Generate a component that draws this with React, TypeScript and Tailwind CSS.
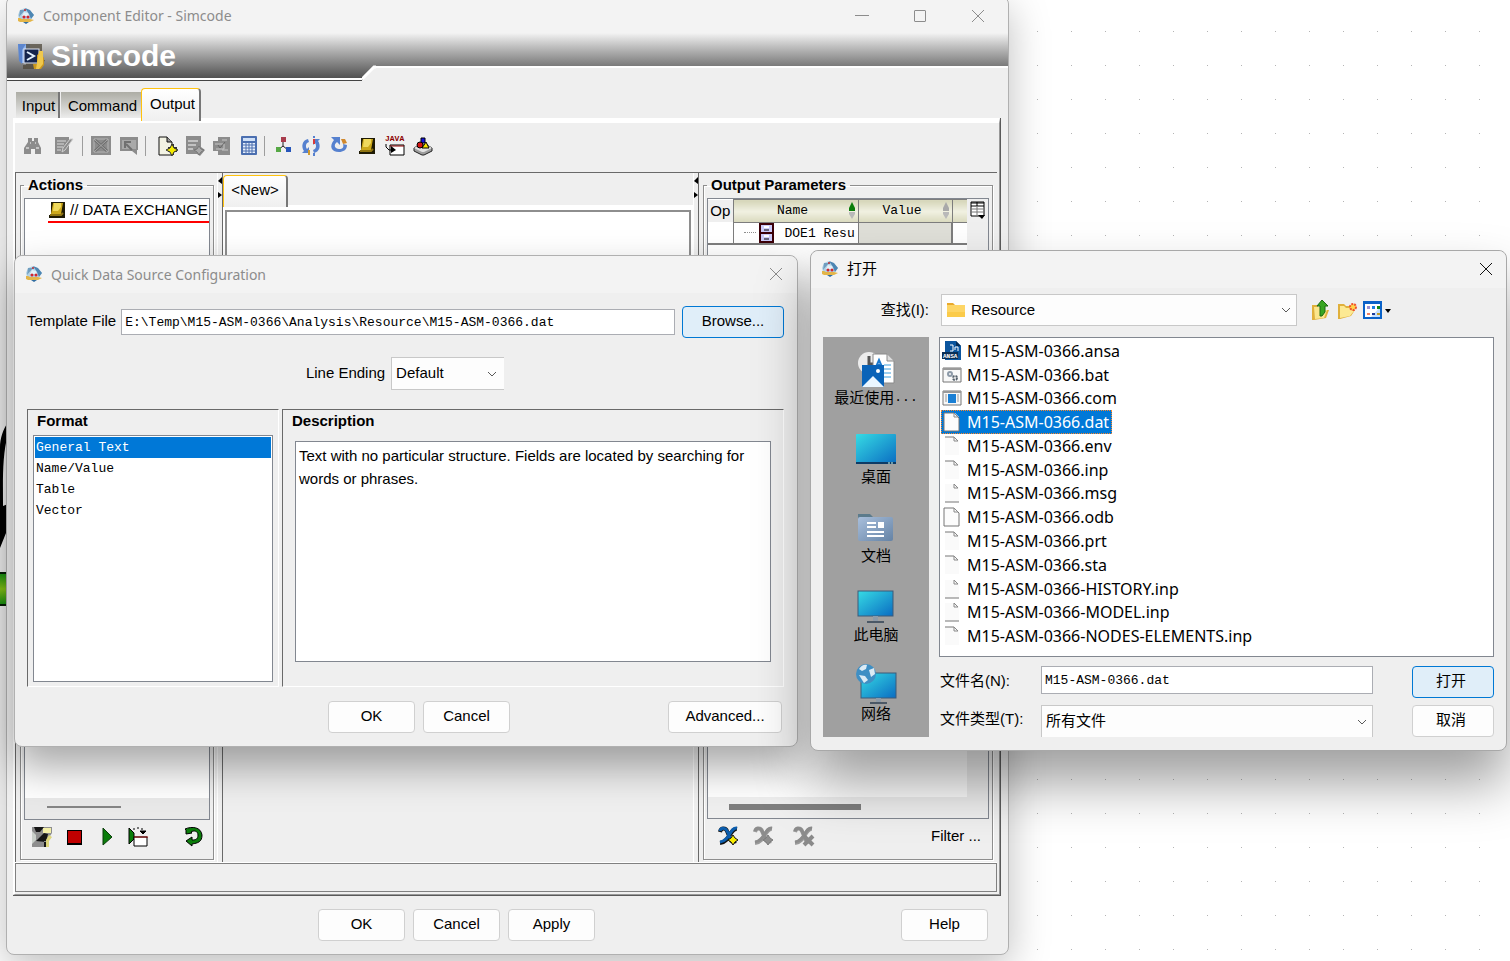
import { useState, type ReactNode } from "react";
import { clsx } from "clsx";

const FORMATS = ["General Text", "Name/Value", "Table", "Vector"];

type FileKind = "ansa" | "bat" | "com" | "page" | "top" | "bottom";

const FILES: { name: string; kind: FileKind }[] = [
  { name: "M15-ASM-0366.ansa", kind: "ansa" },
  { name: "M15-ASM-0366.bat", kind: "bat" },
  { name: "M15-ASM-0366.com", kind: "com" },
  { name: "M15-ASM-0366.dat", kind: "page" },
  { name: "M15-ASM-0366.env", kind: "top" },
  { name: "M15-ASM-0366.inp", kind: "top" },
  { name: "M15-ASM-0366.msg", kind: "bottom" },
  { name: "M15-ASM-0366.odb", kind: "page" },
  { name: "M15-ASM-0366.prt", kind: "top" },
  { name: "M15-ASM-0366.sta", kind: "top" },
  { name: "M15-ASM-0366-HISTORY.inp", kind: "bottom" },
  { name: "M15-ASM-0366-MODEL.inp", kind: "bottom" },
  { name: "M15-ASM-0366-NODES-ELEMENTS.inp", kind: "top" },
];

/* ---------- icons ---------- */

function Icon({ children, size = 20, className }: { children: ReactNode; size?: number; className?: string }) {
  return (
    <svg width={size} height={size} viewBox={`0 0 ${size} ${size}`} className={clsx("shrink-0", className)} aria-hidden="true">
      {children}
    </svg>
  );
}

function AppIcon() {
  return (
    <Icon size={18}>
      <path d="M3 3 8 1l4 2 5 5-3 4-5 1-7-1-1-4z" fill="#b4d3e6" />
      <path d="M3 3h5L2 10z" fill="#6f9dbf" />
      <path d="m8 1 5 2 4 5-3 4-2-5z" fill="#4d86b3" />
      <path d="m7 5 4 1 1 3H5z" fill="#e3f1f8" />
      <circle cx="8" cy="3" r="1" fill="#b3242c" />
      <circle cx="7" cy="10" r="1.500" fill="#d2252e" />
      <circle cx="11" cy="10" r="1.500" fill="#d2252e" />
      <path d="M1 11h2l2 1h8l4 1-4 2H3l-2-1z" fill="#e3b548" />
      <path d="M6 15h6l-3 2z" fill="#2e6ba0" />
    </Icon>
  );
}

function SimcodeIcon() {
  return (
    <Icon size={28}>
      <path d="M1 2h12v4l-4 2v13H5V8H1z" fill="#8fb3ec" />
      <path d="M1 2h8L5 8v14l-3-3z" fill="#5c86cf" />
      <path d="M9 2h16v16h3l-5 9H6v-4h3z" fill="#4d473a" opacity=".75" />
      <rect x="7" y="7" width="15" height="14" fill="#14254d" stroke="#dfe6f2" strokeWidth="1" />
      <path d="m10 10 7 4-7 4" fill="none" stroke="#e4f3ff" strokeWidth="2" />
      <path d="M16 22h4v-9l3-2 4 5v7l-3 4h-7z" fill="#c99820" />
      <path d="M22 9h4v13l-4 5h-3z" fill="#efc84c" />
    </Icon>
  );
}

function Binoculars() {
  return (
    <Icon>
      <path d="M5 2h4v3h2V2h4v4l3 6v6h-6v-5H8v5H1v-6l4-6z" fill="#8c8c8c" />
      <path d="M3 12h3M13 12h3M7 7h1M12 7h1" stroke="#c4c4c4" strokeWidth="2" />
    </Icon>
  );
}

function EditSheet() {
  return (
    <Icon>
      <path d="M1 1h14v17H1z" fill="#8c8c8c" />
      <path d="M3 5h9M3 8h7M3 11h6M3 14h4" stroke="#dadada" />
      <path d="m19 3-8 11-3 2 1-4 7-9z" fill="#8c8c8c" stroke="#cfcfcf" />
    </Icon>
  );
}

function CrossBox() {
  return (
    <Icon>
      <path d="M0 0h20v19H0z" fill="#8c8c8c" />
      <path d="M3 3h14v13H3z" fill="none" stroke="#b5b5b5" />
      <path d="m4 4 12 11M16 4 4 15" stroke="#707070" strokeWidth="3" />
      <path d="m4 4 12 11M16 4 4 15" stroke="#a8a8a8" />
    </Icon>
  );
}

function ArrowSheet() {
  return (
    <Icon>
      <path d="M1 1h18v13h-1v5l-5-4H1z" fill="#8c8c8c" />
      <path d="M3 4h14v9H3z" fill="#a9a9a9" />
      <path d="m13 14-6-6M6 12V6h6" stroke="#707070" strokeWidth="2" fill="none" />
    </Icon>
  );
}

function NewPage() {
  return (
    <Icon className="overflow-visible">
      <path d="M1 1h8l5 5v13H1z" fill="#f3f3e4" stroke="#111" />
      <path d="M9 1v5h5" fill="#999" stroke="#111" />
      <path d="M13 8h3v3h3v5h-3v3h-3v-3h-3v-5h3z" fill="#333" />
      <path d="m14 8 2 4 4 2-4 2-2 4-2-4-4-2 4-2z" fill="#f4ea00" stroke="#333" />
    </Icon>
  );
}

function GrayPageStar() {
  return (
    <Icon>
      <path d="M1 0h15v11l4 3-5 6-3-2H1z" fill="#8c8c8c" />
      <path d="M3 5h10M3 9h8M3 13h5" stroke="#c2c2c2" strokeWidth="2" />
      <path d="m14 10 2 3 3 1-3 2-2 3-2-3-3-2 3-1z" fill="#a8a8a8" stroke="#777" />
    </Icon>
  );
}

function GrayPageCopy() {
  return (
    <Icon>
      <path d="M6 1h12v18H6v-4H1V5h5z" fill="#8c8c8c" />
      <path d="M10 4h5M10 14h6M3 8h9v5H4" stroke="#c6c6c6" fill="none" />
      <path d="m6 9 2 3 5-6" stroke="#666" fill="none" />
    </Icon>
  );
}

function Calculator() {
  return (
    <Icon>
      <rect x="2" width="16" height="19" rx="1" fill="#4b6fb0" />
      <rect x="4" y="2" width="12" height="3" fill="#cfe0f7" />
      <rect x="4" y="7" width="12" height="10" fill="#e8f0fb" />
      <path d="M4 9h12M4 12h12M4 15h12M7 7v10M10 7v10M13 7v10" stroke="#4b6fb0" />
    </Icon>
  );
}

function TreeIcon() {
  return (
    <Icon>
      <path d="M10 6v4m0 0-5 4m5-4 5 4" stroke="#222" fill="none" />
      <rect x="8" y="1" width="5" height="5" fill="#a83c4c" />
      <rect x="3" y="11" width="5" height="5" fill="#56a845" />
      <rect x="13" y="11" width="5" height="5" fill="#2656ba" />
    </Icon>
  );
}

function SyncIcon() {
  return (
    <Icon>
      <path d="M7 3C1 4 0 11 3 15l-2 2h7v-6l-2 2C4 10 5 7 8 6zM13 17c6-1 7-8 4-12l2-2h-7v6l2-2c2 3 1 6-2 7z" fill="#5681cf" />
      <path d="M13 3v5" stroke="#d83a3a" strokeWidth="2" />
      <path d="M8 14v5" stroke="#d09a2d" strokeWidth="2" />
      <path d="M13 0v2M13 17v3" stroke="#5681cf" strokeWidth="2" />
    </Icon>
  );
}

function LoopIcon() {
  return (
    <Icon>
      <path d="M2 1h9v8L8 6c-4 3-2 7 2 7s5-2 4-5l4 1c0 5-4 7-8 7C2 16 0 10 5 4z" fill="#5681cf" />
      <path d="M12 3h4l2 4-4 1z" fill="#d0882d" />
    </Icon>
  );
}

function Scroll() {
  return (
    <Icon size={18}>
      <path d="M3 1h14v16H1v-3h2z" fill="#1e1a04" />
      <path d="M5 2h10l-2 11H3z" fill="#cda91b" />
      <path d="M6 2h7v4l-3 4H5z" fill="#efd95c" />
      <path d="M2 14h11l2-2" stroke="#8f7411" fill="none" strokeWidth="2" />
    </Icon>
  );
}

function JavaIcon() {
  return (
    <Icon className="overflow-visible">
      <text x="0" y="5" fontSize="8" fontFamily="Liberation Mono, monospace" fill="#8b0000" fontWeight="bold">JAVA</text>
      <path d="M5 9h14v10H5z" fill="#fff" stroke="#000" />
      <path d="M5 10h14" stroke="#8b0000" />
      <path d="M1 8v3l3 3h5" stroke="#000" fill="none" />
      <path d="m6 10 5 4-5 3z" fill="#000" />
    </Icon>
  );
}

function ShapesIcon() {
  return (
    <Icon>
      <path d="m1 12 5-3h8l5 3v3l-8 4h-2l-8-4z" fill="#9e9e9e" stroke="#222" />
      <path d="m1 12 8 4h2l8-4-5-3H6z" fill="#e2e2e2" />
      <path d="M8 2h4v5H8z" fill="#1414e0" stroke="#000" />
      <circle cx="7" cy="9" r="3" fill="#d41414" stroke="#000" />
      <path d="m13 6 3 6H9z" fill="#f6e600" stroke="#000" />
    </Icon>
  );
}

function Camera() {
  return (
    <Icon>
      <path d="M0 0h20v6l-4 6v8H0z" fill="#8e8e8e" />
      <path d="M2 0h10L8 5H4zM12 6 4 14l10 1 2-8zM12 14h3v6h-3z" fill="#161616" />
      <path d="m0 4 4 4v5l-4 4z" fill="#c9cfc9" />
      <path d="M11 1h8v5h-8z" fill="#f3efa8" />
      <path d="m17 8 3 2-3 4v6h-3v-7z" fill="#ddd67c" />
    </Icon>
  );
}

function ReplayIcon() {
  return (
    <Icon>
      <path d="M1 1v16l5-5V6z" fill="#0a7d0a" stroke="#000" />
      <path d="M6 10h13v9H6z" fill="#fff" stroke="#000" />
      <path d="M6 10h14" stroke="#8b0000" />
      <path d="M5 2h2M9 1h2M13 2h2M12 4h6l-3 3z" stroke="#000" />
    </Icon>
  );
}

function ReturnIcon() {
  return (
    <Icon>
      <path d="M1 2c7-3 16-2 17 6 0 7-4 8-10 9v2l-6-5 6-4v3c4 0 6-1 6-5s-4-5-7-3l1 1-6 1V3z" fill="#0a7d0a" stroke="#000" />
    </Icon>
  );
}

function VarIcon({ on, badge }: { on?: boolean; badge: "plus" | "cross" }) {
  return (
    <Icon className="overflow-visible">
      <path d="M1 6c1-5 6-4 7-1l3 7c1 4 3 4 6 3M18 3C11 2 11 16 1 17" fill="none" stroke={on ? "#111" : "#9a9a9a"} strokeWidth="4" />
      <path d="M1 5c1-4 6-3 7 0l3 6c1 4 3 4 6 3M18 2C11 1 11 15 1 16" fill="none" stroke={on ? "#0c5eae" : "#8c8c8c"} strokeWidth="3" />
      {badge === "plus" ? (
        <path
          d="m14 9 2 3 3 2-3 2-2 3-2-3-3-2 3-2z"
          fill={on ? "#f6ea00" : "#8e8e8e"}
          stroke={on ? "#111" : "#7c7c7c"}
        />
      ) : (
        <path d="m10 10 9 9M19 10l-9 9" stroke="#8a8a8a" strokeWidth="4" />
      )}
    </Icon>
  );
}

function ColumnPicker() {
  return (
    <Icon size={18}>
      <path d="M2 1h13v14H2z" fill="#fff" stroke="#000" />
      <path d="M2 2h13M2 5h13M8 1v4" stroke="#000" />
      <path d="M2 8h13M2 11h13M8 6v9" stroke="#777" />
      <path d="M9 14h7l-3 4z" fill="#000" />
    </Icon>
  );
}

function SortArrows({ active }: { active?: boolean }) {
  return (
    <svg width="8" height="18" viewBox="0 0 8 18" aria-hidden="true">
      <path d="M4 0 7 6v3H1V6z" fill={active ? "#0a7d0a" : "#a9a9a9"} />
      <path d="M1 10h6v2l-3 5-3-5z" fill="#b9b9b9" />
    </svg>
  );
}

function Chevron() {
  return (
    <svg width="10" height="6" viewBox="0 0 10 6" className="pointer-events-none shrink-0" aria-hidden="true">
      <path d="m1 1 4 4 4-4" fill="none" stroke="#5a5a5a" />
    </svg>
  );
}

function CloseGlyph({ color }: { color: string }) {
  return (
    <svg width="14" height="14" viewBox="0 0 14 14" aria-hidden="true">
      <path d="m1 1 12 12M13 1 1 13" stroke={color} strokeWidth="1" />
    </svg>
  );
}

function FileIcon({ kind }: { kind: FileKind }) {
  if (kind === "ansa") {
    return (
      <Icon>
        <path d="M3 0h11l5 5v14H3z" fill="#0b559e" />
        <path d="M14 0v5h5z" fill="#062c55" />
        <path d="M8 4h3v6H8M13 9V6h3v4" stroke="#fff" fill="none" />
        <path d="M0 11h16v7H0z" fill="#0a2e55" />
        <text x="1" y="17" fontSize="6" fontFamily="Liberation Mono, monospace" fontWeight="bold" fill="#fff">ANSA</text>
      </Icon>
    );
  }
  if (kind === "bat" || kind === "com") {
    return (
      <Icon>
        <path d="M1 3h18v14H1z" fill="#f8f8f8" stroke="#777" />
        <path d="M1 4h18" stroke="#9a9a9a" strokeWidth="2" />
        {kind === "bat" ? (
          <>
            <circle cx="8" cy="9" r="2" fill="none" stroke="#8d9aa8" strokeWidth="2" />
            <circle cx="13" cy="13" r="2" fill="none" stroke="#56616c" strokeWidth="2" strokeDasharray="2 1" />
          </>
        ) : (
          <>
            <path d="M3 7h2M3 9h2M3 11h2M3 13h2M15 7h2M15 9h2M15 11h2M15 13h2" stroke="#999" />
            <rect x="6" y="6" width="8" height="9" fill="#1a7fd4" />
          </>
        )}
      </Icon>
    );
  }
  return (
    <Icon>
      <path d="M3 1h10l4 4v14H3z" fill="#fafafa" />
      {kind === "page" && <path d="M2 1h10l5 5v13H2z" fill="#fcfcfc" stroke="#777" />}
      {kind === "top" && <path d="M3 1h9" stroke="#777" />}
      {kind === "bottom" && <path d="M3 19h14" stroke="#777" />}
      <path d="M12 1v4h4" fill="none" stroke="#888" />
      <path d="m12 1 4 4" stroke="#888" />
    </Icon>
  );
}

/* ---------- places bar drawings ---------- */

function PlaceDefs() {
  return (
    <defs>
      <linearGradient id="screen" x1="0" y1="0" x2="1" y2="1">
        <stop offset="0" stopColor="#36dbe4" />
        <stop offset="1" stopColor="#0a6cc2" />
      </linearGradient>
      <linearGradient id="folder" x1="0" y1="0" x2="1" y2="1">
        <stop offset="0" stopColor="#a9bfdc" />
        <stop offset="1" stopColor="#6583a5" />
      </linearGradient>
    </defs>
  );
}

function PlaceArt({ children }: { children: ReactNode }) {
  return (
    <svg width="44" height="42" viewBox="0 0 44 42" className="-mb-0.5 shrink-0" aria-hidden="true">
      {children}
    </svg>
  );
}

const PLACES: { label: string; dots?: boolean; art: ReactNode }[] = [
  {
    label: "最近使用",
    dots: true,
    art: (
      <>
        <PlaceDefs />
        <circle cx="15" cy="15" r="11" fill="#ececec" />
        <path d="M15 8v8h5" fill="none" stroke="#555" strokeWidth="3" />
        <path d="M19 6h14l7 7v22H19z" fill="#fff" stroke="#8a8a8a" />
        <path d="M33 6v7h7" fill="#ddd" stroke="#8a8a8a" />
        <path d="m22 19 3-7 3 7m-5-2h4" fill="none" stroke="#1a78cc" strokeWidth="2" />
        <path d="M30 17h7M30 21h7M30 25h7M30 29h7" stroke="#3a9fe0" />
        <rect x="8" y="17" width="22" height="22" fill="#0a63b8" />
        <path d="m8 39 11-11 11 11z" fill="#eaf6ff" />
        <circle cx="24" cy="23" r="2" fill="#fff" />
      </>
    ),
  },
  {
    label: "桌面",
    art: (
      <>
        <rect x="2" y="7" width="40" height="30" rx="1" fill="url(#screen)" />
        <path d="M2 35h40v2H2z" fill="#0d3b66" />
        <path d="M34 36h2M37 36h2" stroke="#cfe" />
      </>
    ),
  },
  {
    label: "文档",
    art: (
      <>
        <path d="M4 8h12l3 3v6H4z" fill="#5c7b8c" />
        <rect x="4" y="11" width="35" height="24" rx="2" fill="url(#folder)" />
        <path d="M13 17h9M13 21h9M13 26h17M13 30h17" stroke="#fff" strokeWidth="2" />
        <rect x="24" y="16" width="6" height="6" fill="#fff" />
      </>
    ),
  },
  {
    label: "此电脑",
    art: (
      <>
        <rect x="4" y="6" width="35" height="25" fill="url(#screen)" stroke="#3c5a78" />
        <path d="M19 31h5v5h-5z" fill="#8d9aa8" />
        <path d="M13 37h17" stroke="#4b5866" strokeWidth="2" />
      </>
    ),
  },
  {
    label: "网络",
    art: (
      <>
        <rect x="7" y="9" width="35" height="25" fill="url(#screen)" stroke="#3c5a78" />
        <path d="M22 34h5v4h-5z" fill="#8d9aa8" />
        <path d="M16 39h17" stroke="#4b5866" strokeWidth="2" />
        <circle cx="12" cy="10" r="10" fill="#3f8fc4" />
        <path d="M5 5c2-4 6-5 8-4l-1 4-4 2zM15 6l5-2 1 6-4 3zM5 11l6 1 3 4-4 3z" fill="#dcebf5" />
      </>
    ),
  },
];

function UpFolder() {
  return (
    <Icon>
      <path d="M1 5h5l1 2h6v3h5l-3 8-12 2H1z" fill="#e0b03c" />
      <path d="M3 7h8l1 3h4l-3 8-9 1z" fill="#fbe68c" />
      <path d="M9 16V6H6l5-6 6 6h-3v6l-3 4z" fill="#37a522" stroke="#1b6b0f" />
    </Icon>
  );
}

function NewFolder() {
  return (
    <Icon>
      <path d="M1 4h6l2 2h6v4h3l-4 6-11 3H1z" fill="#e0b03c" />
      <path d="M3 6h4l2 2h5v2l3 1-4 5-10 2z" fill="#fce993" />
      <circle cx="16" cy="7" r="3" fill="#ffd54a" stroke="#f0502c" strokeWidth="2" strokeDasharray="2 1" />
    </Icon>
  );
}

function ViewIcon() {
  return (
    <svg width="28" height="20" viewBox="0 0 28 20" aria-hidden="true">
      <path d="M0 1h19v18H0z" fill="#0a62c8" />
      <path d="M2 4h15v13H2z" fill="#fff" />
      <path d="M17 7v10H8z" fill="#c4e0ff" />
      <path d="M4 6h3v3H4z" fill="#9a8fd0" />
      <path d="M9 6h3v3H9z" fill="#1a7fe0" />
      <path d="M14 6h3v3h-3z" fill="#138a13" />
      <path d="M4 13h3v2H4z" fill="#f08060" />
      <path d="M9 13h3v2H9z" fill="#1a3c9c" />
      <path d="M14 13h3v2h-3z" fill="#c09a20" />
      <path d="M22 9h6l-3 4z" fill="#000" />
    </svg>
  );
}

function FolderIcon() {
  return (
    <Icon>
      <path d="M1 3h6l2 2h9v11H1z" fill="#e9a92c" />
      <path d="M1 5h18v12H1z" fill="#fdd565" />
      <path d="M1 12h18v5H1z" fill="#fbcb4a" />
    </Icon>
  );
}

/* ---------- shared controls ---------- */

function PushButton({ children, primary, className }: { children: ReactNode; primary?: boolean; className?: string }) {
  return (
    <button
      type="button"
      className={clsx(
        "h-8 shrink-0 rounded border pb-0.5 text-[15px] leading-5",
        primary ? "border-[#0078d4] bg-[#e0eef9]" : "border-[#d0d0d0] bg-[#fdfdfd]",
        className
      )}
    >
      {children}
    </button>
  );
}

function ToolButton({ label, children }: { label: string; children: ReactNode }) {
  return (
    <button type="button" aria-label={label} className="flex h-5 w-5 shrink-0 items-center justify-center">
      {children}
    </button>
  );
}

function ToolSeparator() {
  return <span className="h-5 w-px bg-[#9d9d9d]" />;
}

function SplitHandle() {
  return (
    <div className="flex w-1 shrink-0 flex-col pt-1">
      <svg width="4" height="22" viewBox="0 0 4 22" aria-hidden="true">
        <path d="M4 0v7L0 4zM0 15l4 3-4 3z" fill="#000" />
      </svg>
    </div>
  );
}

/* ---------- windows ---------- */

function ComponentEditor() {
  return (
    <section className="absolute -top-1 right-[501px] bottom-1.5 left-1.5 flex flex-col rounded-lg border border-[#b0b0b0] bg-[#efefef] shadow-[0_12px_40px_rgba(0,0,0,0.26)]">
      <header className="flex h-9 shrink-0 items-center rounded-t-lg bg-[#f3f3f3] pt-px pr-[17px] pl-2.5">
        <AppIcon />
        <h1 className="ml-2 flex-1 font-['Noto_Sans'] text-[14px] text-[#8c8c8c]">Component Editor - Simcode</h1>
        <div className="flex items-center gap-[45px]">
          <button type="button" aria-label="Minimize" className="flex h-4 w-3.5 items-center">
            <span className="h-px w-full bg-[#8c8c8c]" />
          </button>
          <button type="button" aria-label="Maximize" className="h-3 w-3 rounded-[1px] border border-[#8c8c8c]" />
          <button type="button" aria-label="Close" className="mr-1.5">
            <CloseGlyph color="#8c8c8c" />
          </button>
        </div>
      </header>

      {/* Banner */}
      <div className="flex h-[47px] shrink-0 bg-linear-to-b from-[#f3f3f3] to-[#4c4c4c]">
        <div className="flex w-[355px] shrink-0 items-center gap-1.5 border-b-2 border-white pl-2.5 shadow-[0_1px_0_#444]">
          <SimcodeIcon />
          <h2 className="text-[30px] font-bold text-white">Simcode</h2>
        </div>
        <svg width="14" height="47" viewBox="0 0 14 47" className="shrink-0" aria-hidden="true">
          <path d="M0 47 12 33h2v14z" fill="#efefef" />
          <path d="M0 46 12 34h2" fill="none" stroke="#fff" strokeWidth="3" />
        </svg>
        <div className="mt-[33px] flex-1 border-t-2 border-white bg-[#efefef]" />
      </div>

      {/* Tabs */}
      <div role="tablist" className="mt-2 ml-[9px] flex h-[30px] shrink-0 items-end text-[15px]">
        <button type="button" role="tab" className="h-[26px] w-11 border-r-2 border-[#777] bg-linear-to-b from-[#adada5] to-[#ececec] pt-0.5 pl-[3px]">Input</button>
        <button type="button" role="tab" className="ml-px h-[26px] w-20 bg-linear-to-b from-[#adada5] to-[#ececec] pt-0.5 pl-[3px]">Command</button>
        <button type="button" role="tab" aria-selected="true" className="relative z-10 -mb-[3px] h-[33px] w-[60px] rounded-t-sm border-t border-r-2 border-l border-t-[#ffc20e] border-r-[#777] border-l-[#ffc20e] bg-linear-to-b from-white to-[#efefef] pb-px pl-1">
          Output
        </button>
      </div>

      <div className="mr-[7px] ml-1.5 flex min-h-0 flex-1 flex-col border-r border-b border-[#5a5a5a]">
        <div className="flex min-h-0 flex-1 flex-col border-t-[5px] border-r border-b border-l-2 border-t-white border-r-[#999] border-b-[#999] border-l-white pr-0.5">
          <div className="flex h-[49px] shrink-0 items-center pb-1 pl-2">
            <div className="flex gap-[11px]">
              <ToolButton label="Find"><Binoculars /></ToolButton>
              <ToolButton label="Edit"><EditSheet /></ToolButton>
            </div>
            <div className="flex gap-2 pl-2">
              <ToolSeparator />
              <ToolButton label="Delete"><CrossBox /></ToolButton>
              <ToolButton label="Move"><ArrowSheet /></ToolButton>
            </div>
            <div className="flex gap-3 pl-1.5">
              <ToolSeparator />
              <div className="flex gap-[7px]">
                <ToolButton label="New section"><NewPage /></ToolButton>
                <ToolButton label="Insert section"><GrayPageStar /></ToolButton>
                <ToolButton label="Check section"><GrayPageCopy /></ToolButton>
                <ToolButton label="Calculator"><Calculator /></ToolButton>
              </div>
            </div>
            <div className="flex gap-2 pl-[5px]">
              <ToolSeparator />
              <ToolButton label="Structure"><TreeIcon /></ToolButton>
              <ToolButton label="Synchronize"><SyncIcon /></ToolButton>
              <ToolButton label="Loop"><LoopIcon /></ToolButton>
              <ToolButton label="Script"><Scroll /></ToolButton>
              <ToolButton label="Java"><JavaIcon /></ToolButton>
              <ToolButton label="Plugins"><ShapesIcon /></ToolButton>
            </div>
          </div>

          <div className="flex min-h-0 flex-1 border-t border-[#696969]">
            {/* Actions */}
            <div className="flex w-[203px] shrink-0 flex-col border-r border-l border-r-white border-l-[#696969] pt-1 pr-[3px] pb-[3px] pl-1">
              <fieldset className="flex min-h-0 flex-1 flex-col border border-[#8e8e8e] px-[3px] shadow-[1px_1px_0_#fff,inset_1px_1px_0_#fff]">
                <legend className="px-1 text-[15px] leading-4 font-bold">Actions</legend>
                <div className="mt-[5px] flex min-h-0 flex-1 flex-col border border-[#828790] bg-white">
                  <div className="ml-[23px] flex h-6 items-center gap-1 overflow-hidden border-b-2 border-[#f00] text-[15px] whitespace-nowrap">
                    <Scroll />
                    // DATA EXCHANGE
                  </div>
                  <div className="flex-1" />
                  <div className="h-[21px] bg-[#e9e9e9] pt-2 pl-[22px]">
                    <div className="h-0.5 w-[74px] bg-[#858585]" />
                  </div>
                </div>
                <div className="flex h-[39px] shrink-0 items-center gap-3 pr-1.5 pb-[5px] pl-2">
                  <ToolButton label="Record"><Camera /></ToolButton>
                  <ToolButton label="Stop">
                    <span className="h-[15px] w-[15px] border border-b-2 border-black bg-[#c00000]" />
                  </ToolButton>
                  <ToolButton label="Run">
                    <Icon>
                      <path d="M7 1v17l9-8z" fill="#0a7d0a" stroke="#0b3d0b" />
                    </Icon>
                  </ToolButton>
                  <ToolButton label="Run section"><ReplayIcon /></ToolButton>
                  <span className="flex-1" />
                  <ToolButton label="Revert"><ReturnIcon /></ToolButton>
                </div>
              </fieldset>
            </div>
            <SplitHandle />

            {/* Editor */}
            <div className="flex min-w-0 flex-1 flex-col border-r border-l border-r-white border-l-[#696969] pt-0.5">
              <div role="tablist" className="flex h-[30px] shrink-0">
                <button type="button" role="tab" aria-selected="true" className="relative -mb-0.5 h-8 w-[65px] rounded-t-sm border-t border-r-2 border-l border-t-[#ffc20e] border-r-[#777] border-l-[#ffc20e] bg-linear-to-b from-white to-[#efefef] pb-0.5 text-[15px]">
                  &lt;New&gt;
                </button>
              </div>
              <div className="flex h-[500px] flex-col border-t-[5px] border-r-2 border-l-2 border-white">
                <textarea aria-label="Section" className="w-full flex-1 resize-none border-2 border-[#8e8e8e] bg-white outline-none" />
              </div>
            </div>
            <SplitHandle />

            {/* Output parameters */}
            <div className="flex w-[299px] shrink-0 flex-col border-l border-[#696969] px-1 pt-1 pb-[3px]">
              <fieldset className="flex min-h-0 min-w-0 flex-1 flex-col border border-[#8e8e8e] px-[3px] shadow-[1px_1px_0_#fff,inset_1px_1px_0_#fff]">
                <legend className="px-1 text-[15px] leading-4 font-bold">Output Parameters</legend>
                <div className="mt-[5px] flex min-h-0 flex-1 flex-col border border-[#828790] bg-[#efefef]">
                  <div className="flex min-h-0 flex-1">
                    <div className="min-w-0 flex-1 bg-white">
                      <table className="w-full table-fixed border-collapse border-b-2 border-[#7d7d7d]">
                        <thead>
                          <tr className="h-[22px]">
                            <th className="w-[25px] bg-[#efefef] p-0 text-[15px] font-normal">Op</th>
                            <th className="w-[125px] border border-[#7d7d7d] bg-linear-to-b from-[#d5d5b8] via-[#f1f1e2] to-[#d9d9bd] p-0 pl-1 font-['Liberation_Mono'] text-[13px] font-normal">
                              <div className="flex items-center">
                                <span className="flex-1 text-center">Name</span>
                                <SortArrows active />
                                <span className="w-0.5" />
                              </div>
                            </th>
                            <th className="w-[94px] border border-[#7d7d7d] bg-linear-to-b from-[#d5d5b8] via-[#f1f1e2] to-[#d9d9bd] p-0 pl-1 font-['Liberation_Mono'] text-[13px] font-normal">
                              <div className="flex items-center">
                                <span className="flex-1 text-center">Value</span>
                                <SortArrows />
                                <span className="w-0.5" />
                              </div>
                            </th>
                            <th className="border-y border-[#7d7d7d] bg-linear-to-b from-[#d5d5b8] via-[#f1f1e2] to-[#d9d9bd] p-0" />
                          </tr>
                        </thead>
                        <tbody>
                          <tr className="h-[21px]">
                            <td className="border-r border-[#7d7d7d] p-0" />
                            <td className="overflow-hidden border-r border-[#7d7d7d] p-0 font-['Liberation_Mono'] text-[13px] whitespace-nowrap">
                              <div className="flex h-5 items-center pl-2.5">
                                <span className="w-3 border-t border-dotted border-[#8e8e8e]" />
                                <svg width="16" height="20" viewBox="0 0 16 20" className="mr-2.5 ml-[3px] shrink-0" aria-hidden="true">
                                  <rect x="1" y="1" width="13" height="18" fill="#ccccfa" stroke="#3c0008" strokeWidth="2" />
                                  <path d="M1 10h13" stroke="#3c0008" strokeWidth="2" />
                                  <path d="M5 7h5M5 16h5" stroke="#000" />
                                  <path d="M5 4h5M5 13h5" stroke="#fff" strokeWidth="2" />
                                </svg>
                                <span className="pt-0.5">DOE1 Resu</span>
                              </div>
                            </td>
                            <td className="border-r-2 border-[#7d7d7d] bg-[#dfdfd8] p-0" />
                            <td className="p-0" />
                          </tr>
                        </tbody>
                      </table>
                    </div>
                    <div className="w-[21px] shrink-0 pt-0.5 pl-0.5">
                      <button type="button" aria-label="Choose columns"><ColumnPicker /></button>
                    </div>
                  </div>
                  <div className="h-[21px] pt-[7px] pl-[21px]">
                    <div className="h-1.5 w-[132px] bg-[#7f7f7f]" />
                  </div>
                </div>
                <div className="flex h-10 shrink-0 items-center pr-2 pb-1.5 pl-3 text-[15px]">
                  <ToolButton label="Add parameter"><VarIcon on badge="plus" /></ToolButton>
                  <span className="w-[15px]" />
                  <ToolButton label="Add child"><VarIcon badge="plus" /></ToolButton>
                  <span className="w-5" />
                  <ToolButton label="Remove parameter"><VarIcon badge="cross" /></ToolButton>
                  <button type="button" className="ml-auto">Filter ...</button>
                </div>
              </fieldset>
            </div>
          </div>

          {/* Status bar */}
          <div className="mb-0.5 h-[29px] shrink-0 border border-[#808080] shadow-[0_-1px_0_#fff]" />
        </div>
      </div>

      <footer className="flex shrink-0 gap-2 py-[13px] pr-5 pl-[311px]">
        <PushButton className="w-[87px]">OK</PushButton>
        <PushButton className="w-[87px]">Cancel</PushButton>
        <PushButton className="w-[87px]">Apply</PushButton>
        <PushButton className="ml-auto w-[87px]">Help</PushButton>
      </footer>
    </section>
  );
}

function DataSourceDialog() {
  const [format, setFormat] = useState(FORMATS[0]);
  const [path, setPath] = useState("E:\\Temp\\M15-ASM-0366\\Analysis\\Resource\\M15-ASM-0366.dat");

  return (
    <section className="absolute top-[255px] right-[712px] left-3.5 flex flex-col rounded-lg border border-[#b0b0b0] bg-[#efefef] shadow-[0_20px_40px_rgba(0,0,0,0.35)]">
      <header className="flex h-[37px] items-center rounded-t-lg bg-[#f3f3f3] pr-3.5 pb-px pl-2.5">
        <AppIcon />
        <h2 className="ml-2 flex-1 font-['Noto_Sans'] text-[14px] text-[#8c8c8c]">Quick Data Source Configuration</h2>
        <button type="button" aria-label="Close">
          <CloseGlyph color="#8c8c8c" />
        </button>
      </header>

      <div className="flex items-center pt-[13px] pr-[13px] pl-3 text-[15px]">
        <label htmlFor="template" className="pb-0.5">Template File</label>
        <input
          id="template"
          value={path}
          onChange={(e) => setPath(e.target.value)}
          className="ml-[5px] h-[26px] min-w-0 flex-1 border border-[#abadb3] bg-white px-[3px] font-['Liberation_Mono'] text-[13px] outline-none"
        />
        <PushButton primary className="ml-[7px] w-[102px]">Browse...</PushButton>
      </div>

      <div className="mt-[19px] flex items-center justify-center pr-0.5 text-[15px]">
        <label htmlFor="ending">Line Ending</label>
        <div className="ml-1.5 flex h-[33px] w-[113px] items-center border border-r-0 border-[#c8c8c8] bg-[#fdfdfd] pr-[7px] pl-1">
          <select id="ending" className="min-w-0 flex-1 appearance-none bg-transparent outline-none">
            <option>Default</option>
          </select>
          <Chevron />
        </div>
      </div>

      <div className="mt-[19px] flex h-[278px] gap-[3px] pr-[13px] pl-3">
        <div className="flex w-[252px] shrink-0 flex-col border border-t-[#696969] border-r-white border-b-white border-l-[#696969] px-[5px] pt-0.5 pb-1">
          <h3 className="pl-1 text-[15px] leading-[18px] font-bold">Format</h3>
          <ul role="listbox" aria-label="Format" className="mt-[5px] flex-1 border border-[#828790] bg-white p-px font-['Liberation_Mono'] text-[13px]">
            {FORMATS.map((item) => (
              <li
                key={item}
                role="option"
                aria-selected={item === format}
                onClick={() => setFormat(item)}
                className={clsx("h-[21px] px-px leading-[21px]", item === format && "bg-[#0078d7] text-white")}
              >
                {item}
              </li>
            ))}
          </ul>
        </div>
        <div className="flex flex-1 flex-col border border-t-[#696969] border-r-white border-b-white border-l-[#696969] px-3 pt-0.5 pb-6">
          <h3 className="-ml-[3px] text-[15px] leading-[18px] font-bold">Description</h3>
          <p className="mt-[11px] flex-1 border border-[#828790] bg-white px-[3px] py-0.5 text-[15px] leading-[23px]">
            Text with no particular structure. Fields are located by searching for words or phrases.
          </p>
        </div>
      </div>

      <footer className="flex gap-2 pt-3.5 pr-[15px] pb-[13px] pl-[313px]">
        <PushButton className="w-[87px]">OK</PushButton>
        <PushButton className="w-[87px]">Cancel</PushButton>
        <PushButton className="ml-auto w-[114px]">Advanced...</PushButton>
      </footer>
    </section>
  );
}

function OpenDialog() {
  const [selected, setSelected] = useState("M15-ASM-0366.dat");

  return (
    <section className="absolute top-[250px] right-[3px] left-[810px] flex flex-col rounded-lg border border-[#a8a8a8] bg-[#efefef] font-['Liberation_Sans','Noto_Sans_CJK_SC',sans-serif] text-[15px] shadow-[0_32px_54px_rgba(0,0,0,0.38)]">
      <header className="flex h-[37px] items-center rounded-t-lg bg-[#f3f3f3] pr-3 pb-px pl-2.5">
        <AppIcon />
        <h2 className="ml-2 flex-1">打开</h2>
        <button type="button" aria-label="Close" className="mr-px">
          <CloseGlyph color="#111111" />
        </button>
      </header>

      <div className="flex items-center px-3 pt-1.5">
        <label htmlFor="lookin" className="w-[106px] shrink-0 text-right">查找(I):</label>
        <div className="ml-3 flex h-8 flex-1 items-center border border-[#c8c8c8] bg-[#fdfdfd] pr-[5px] pl-1">
          <FolderIcon />
          <select id="lookin" className="ml-[5px] min-w-0 flex-1 appearance-none bg-transparent outline-none">
            <option>Resource</option>
          </select>
          <Chevron />
        </div>
        <div className="ml-3.5 flex w-[183px] shrink-0 gap-1.5">
          <button type="button" aria-label="Up one level"><UpFolder /></button>
          <button type="button" aria-label="New folder"><NewFolder /></button>
          <button type="button" aria-label="View"><ViewIcon /></button>
        </div>
      </div>

      <div className="mt-[11px] flex gap-2.5 px-3 pb-[13px]">
        <nav className="flex w-[106px] shrink-0 flex-col gap-[19px] bg-[#a0a0a0] pt-[11px]">
          {PLACES.map((place) => (
            <button key={place.label} type="button" className="flex h-[60px] flex-col items-center leading-5">
              <PlaceArt>{place.art}</PlaceArt>
              <span className="flex h-5 items-center">
                {place.label}
                {place.dots && <span className="font-['Liberation_Mono'] text-[13px]">...</span>}
              </span>
            </button>
          ))}
        </nav>

        <div className="min-w-0 flex-1">
          <div className="h-80 border border-[#828790] bg-white pt-px pl-px">
            <ul role="listbox" aria-label="Files" className="grid h-[309px] auto-rows-fr font-['Noto_Sans'] text-base">
              {FILES.map((file) => (
                <li
                  key={file.name}
                  role="option"
                  aria-selected={file.name === selected}
                  onClick={() => setSelected(file.name)}
                  className={clsx(
                    "flex w-fit items-center gap-1 border pr-0.5 whitespace-nowrap",
                    file.name === selected ? "border-dotted border-[#ff8728] bg-[#0078d7] text-white" : "border-transparent"
                  )}
                >
                  <FileIcon kind={file.kind} />
                  <span className="ml-px leading-5">{file.name}</span>
                </li>
              ))}
            </ul>
          </div>

          <div className="mt-[9px] flex h-8 items-center">
            <label htmlFor="filename" className="w-[102px] shrink-0 pb-0.5 pl-px">文件名(N):</label>
            <input
              id="filename"
              value={selected}
              onChange={(e) => setSelected(e.target.value)}
              className="mb-1 h-7 min-w-0 flex-1 border border-[#abadb3] bg-white px-[3px] font-['Liberation_Mono'] text-[13px] outline-none"
            />
            <PushButton primary className="ml-[39px] w-[82px] pr-1">打开</PushButton>
          </div>
          <div className="mt-[7px] flex h-8 items-center">
            <label htmlFor="filetype" className="w-[102px] shrink-0 pb-1 pl-px">文件类型(T):</label>
            <div className="flex h-8 min-w-0 flex-1 items-center border border-b-0 border-[#c8c8c8] bg-[#fdfdfd] pr-[5px] pl-1">
              <select id="filetype" className="min-w-0 flex-1 appearance-none bg-transparent outline-none">
                <option>所有文件</option>
              </select>
              <Chevron />
            </div>
            <PushButton className="ml-[39px] w-[82px] pr-1">取消</PushButton>
          </div>
        </div>
      </div>
    </section>
  );
}

export default function App() {
  return (
    <main className="relative h-screen overflow-hidden bg-white font-['Liberation_Sans','Noto_Sans_CJK_SC',sans-serif] text-black">
      {/* Workflow canvas behind the windows */}
      <svg width="100%" height="100%" className="absolute inset-0" aria-hidden="true">
        <defs>
          <pattern id="grid" width="34" height="34" patternUnits="userSpaceOnUse">
            <rect x="17" y="31" width="1" height="1" fill="#b4b4b4" />
          </pattern>
          <linearGradient id="node" x1="0" y1="0" x2="0" y2="1">
            <stop offset="0" stopColor="#149914" />
            <stop offset=".5" stopColor="#8fd018" />
            <stop offset="1" stopColor="#149914" />
          </linearGradient>
        </defs>
        <rect x="1010" width="100%" height="100%" fill="url(#grid)" />
        <path d="M8 422C3 430 0 438 0 448v100l8-20v-24l-5 2c0-26-1-50 5-72z" fill="#000" />
        <rect x="-4" y="573" width="14" height="32" fill="url(#node)" stroke="#061f06" strokeWidth="2" />
      </svg>
      <ComponentEditor />
      <DataSourceDialog />
      <OpenDialog />
    </main>
  );
}
